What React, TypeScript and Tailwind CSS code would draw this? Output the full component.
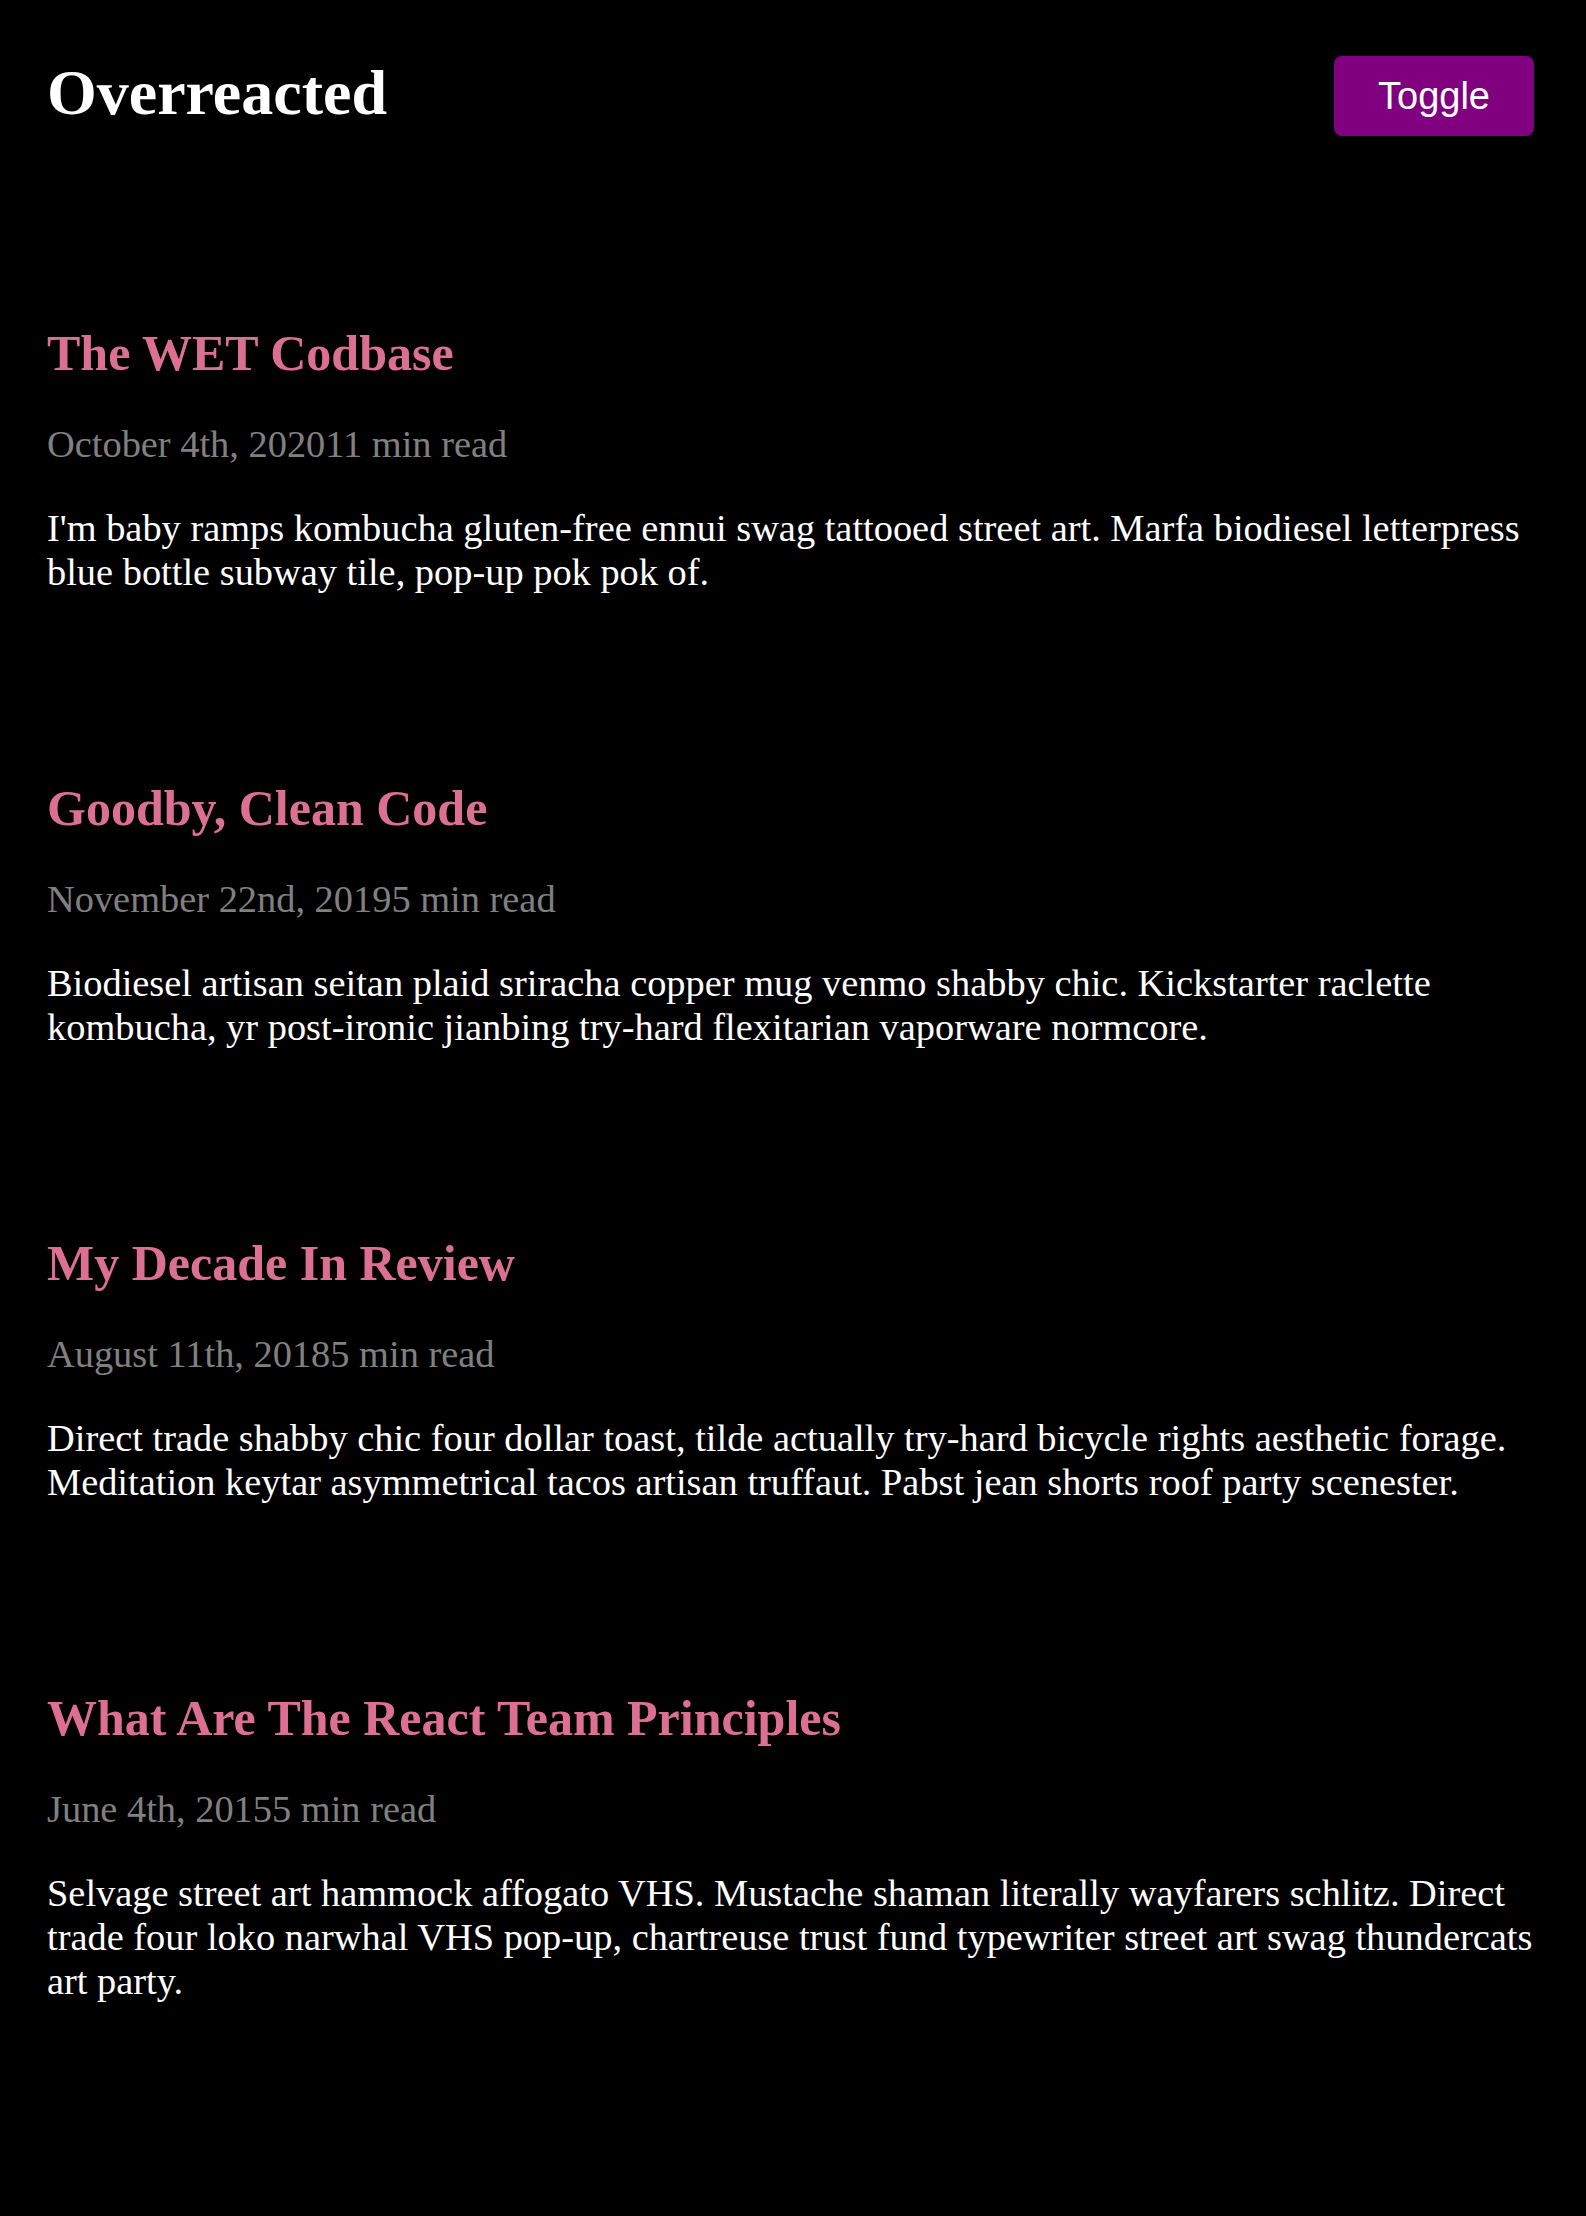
import { useState } from "react";

interface Post {
  title: string;
  date: string;
  read: string;
  body: string;
}

const posts: Post[] = [
  {
    title: "The WET Codbase",
    date: "October 4th, 2020",
    read: "11 min read",
    body: "I'm baby ramps kombucha gluten-free ennui swag tattooed street art. Marfa biodiesel letterpress blue bottle subway tile, pop-up pok pok of.",
  },
  {
    title: "Goodby, Clean Code",
    date: "November 22nd, 2019",
    read: "5 min read",
    body: "Biodiesel artisan seitan plaid sriracha copper mug venmo shabby chic. Kickstarter raclette kombucha, yr post-ironic jianbing try-hard flexitarian vaporware normcore.",
  },
  {
    title: "My Decade In Review",
    date: "August 11th, 2018",
    read: "5 min read",
    body: "Direct trade shabby chic four dollar toast, tilde actually try-hard bicycle rights aesthetic forage. Meditation keytar asymmetrical tacos artisan truffaut. Pabst jean shorts roof party scenester.",
  },
  {
    title: "What Are The React Team Principles",
    date: "June 4th, 2015",
    read: "5 min read",
    body: "Selvage street art hammock affogato VHS. Mustache shaman literally wayfarers schlitz. Direct trade four loko narwhal VHS pop-up, chartreuse trust fund typewriter street art swag thundercats art party.",
  },
];

export default function App() {
  const [dark, setDark] = useState(true);

  return (
    <div
      className={`min-h-screen pl-[47px] pr-[52px] pt-[56px] pb-[200px] font-['Liberation_Serif','Times_New_Roman',serif] ${dark ? "bg-black text-white" : "bg-white text-black"}`}
    >
      <header className="flex items-start justify-between">
        <h1 className="text-[64px] font-bold leading-[normal]">Overreacted</h1>
        <button
          onClick={() => setDark(!dark)}
          className="h-[80px] w-[200px] rounded-lg bg-[#800080] text-[38px] leading-[normal] text-white font-['Liberation_Sans',Arial,sans-serif]"
        >
          Toggle
        </button>
      </header>

      <main>
        {posts.map((post) => (
          <article key={post.title} className="mt-[185px] first:mt-[188px]">
            <h2 className="text-[50px] font-bold leading-[normal] text-[#db7093]">{post.title}</h2>
            <p className="mt-[40px] text-[38.4px] leading-[normal] text-[#808080]">
              <span>{post.date}</span>
              <span>{post.read}</span>
            </p>
            <p className="mt-[40px] text-[38.4px] leading-[normal]">{post.body}</p>
          </article>
        ))}
      </main>
    </div>
  );
}
